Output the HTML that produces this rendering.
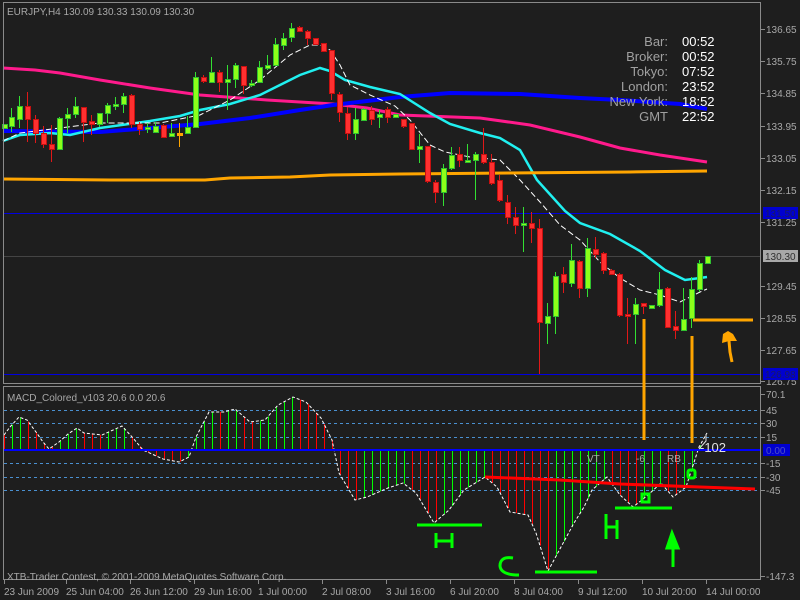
<!DOCTYPE html>
<html><head><meta charset="utf-8"><style>
html,body{margin:0;padding:0;background:#1e1e1e;width:800px;height:600px;overflow:hidden}
svg{display:block}
text{font-family:"Liberation Sans","DejaVu Sans",sans-serif}
</style></head><body>
<svg id="s" width="800" height="600" xmlns="http://www.w3.org/2000/svg">
<rect width="800" height="600" fill="#1e1e1e"/>
<g id="back"></g>
<!-- frames -->
<rect x="3.5" y="2.5" width="757" height="381" fill="none" stroke="#8a8a8a"/>
<rect x="3.5" y="386.5" width="757" height="193" fill="none" stroke="#8a8a8a"/>
<g id="fg"></g>
<!-- texts -->
<g font-size="10" fill="#a8a8a8">
<text x="7" y="15">EURJPY,H4  130.09 130.33 130.09 130.30</text>
<text x="7" y="401">MACD_Colored_v103 20.6 0.0 20.6</text>
<text x="7" y="580">XTB-Trader Contest, © 2001-2009 MetaQuotes Software Corp.</text>
</g>
<g font-size="10" fill="#a8a8a8">
<text x="766" y="33">136.65</text><text x="766" y="65">135.75</text><text x="766" y="97">134.85</text>
<text x="766" y="130">133.95</text><text x="766" y="162">133.05</text><text x="766" y="194">132.15</text>
<text x="766" y="226">131.25</text><text x="766" y="290">129.45</text><text x="766" y="322">128.55</text>
<text x="766" y="354">127.65</text><text x="766" y="385">126.75</text>
<text x="766" y="398">70.1</text><text x="766" y="414">45</text><text x="766" y="427">30</text><text x="766" y="441">15</text>
<text x="766" y="467">-15</text><text x="766" y="481">-30</text><text x="766" y="494">-45</text><text x="766" y="580">-147.3</text>
</g>
<rect x="763" y="207" width="35" height="12" fill="#0000d0"/><text x="765" y="217" font-size="10" fill="#1a1a60">131.50</text>
<rect x="763" y="368" width="35" height="12" fill="#0000d0"/><text x="765" y="378" font-size="10" fill="#1a1a60">126.98</text>
<rect x="763" y="250" width="35" height="12" fill="#a8a8a8"/><text x="765" y="260" font-size="10" fill="#303030">130.30</text>
<rect x="763" y="444" width="27" height="12" fill="#0000d0"/><text x="766" y="454" font-size="10" fill="#5050c0">0.00</text>
<g font-size="13" fill="#a0a0a0" text-anchor="end">
<text x="668" y="46">Bar:</text><text x="668" y="61">Broker:</text><text x="668" y="76">Tokyo:</text>
<text x="668" y="91">London:</text><text x="668" y="106">New York:</text><text x="668" y="121">GMT</text>
</g>
<g font-size="13" fill="#ffffff">
<text x="682" y="46">00:52</text><text x="682" y="61">00:52</text><text x="682" y="76">07:52</text>
<text x="682" y="91">23:52</text><text x="682" y="106">18:52</text><text x="682" y="121">22:52</text>
</g>
<g font-size="10" fill="#a8a8a8">
<text x="587" y="462">VT</text><text x="636" y="462">-6</text><text x="667" y="462">RB</text>
</g>
<text x="700" y="452" font-size="13" fill="#e0e0e0">-102</text>
<g font-size="10" fill="#a8a8a8">
<text x="4" y="595">23 Jun 2009</text><text x="66" y="595">25 Jun 04:00</text><text x="130" y="595">26 Jun 12:00</text>
<text x="194" y="595">29 Jun 16:00</text><text x="258" y="595">1 Jul 00:00</text><text x="322" y="595">2 Jul 08:00</text>
<text x="386" y="595">3 Jul 16:00</text><text x="450" y="595">6 Jul 20:00</text><text x="514" y="595">8 Jul 04:00</text>
<text x="578" y="595">9 Jul 12:00</text><text x="642" y="595">10 Jul 20:00</text><text x="706" y="595">14 Jul 00:00</text>
</g>
</svg>
<script>
var NS="http://www.w3.org/2000/svg";
var back=document.getElementById("back"),fg=document.getElementById("fg");
function el(p,t,a){var e=document.createElementNS(NS,t);for(var k in a)e.setAttribute(k,a[k]);p.appendChild(e);return e;}
function pl(p,pts,st,w,extra){var a={points:pts.map(function(q){return q.join(",")}).join(" "),fill:"none",stroke:st,"stroke-width":w};for(var k in extra)a[k]=extra[k];return el(p,"polyline",a);}
// horizontal level lines
el(back,"line",{x1:4,y1:213.5,x2:760,y2:213.5,stroke:"#0000e0"});
el(back,"line",{x1:4,y1:374.5,x2:760,y2:374.5,stroke:"#0000e0"});
el(back,"line",{x1:4,y1:256.5,x2:760,y2:256.5,stroke:"#444"});
// axis ticks
[29,61,93,126,158,190,222,286,318,350,381,394,410,423,437,463,477,490,576].forEach(function(y){el(back,"line",{x1:761,y1:y+.5,x2:765,y2:y+.5,stroke:"#8a8a8a"})});
[4,66,130,194,258,322,386,450,514,578,642,706].forEach(function(x){el(back,"line",{x1:x+.5,y1:580,x2:x+.5,y2:584,stroke:"#8a8a8a"})});
// indicator dotted levels
[410,423,437,463,477,490].forEach(function(y){el(back,"line",{x1:4,y1:y+.5,x2:760,y2:y+.5,stroke:"#4a90d0","stroke-dasharray":"3,3"})});
// MAs
pl(back,[[3,68],[35,70],[60,73],[100,80],[150,88],[200,95],[267,100],[333,104],[367,108],[400,115],[480,118],[530,125],[580,137],[620,148],[660,155],[707,162]],"#ff1a8c",3);
pl(back,[[3,131],[100,132],[200,124],[250,118],[300,110],[333,105],[367,101],[400,97],[450,93],[520,94],[580,98],[620,100],[680,104],[707,109]],"#0000ff",4);
pl(back,[[3,141],[20,135],[50,133],[70,135],[100,128],[150,121],[180,116],[200,110],[230,104],[260,95],[280,85],[300,75],[320,68],[330,71],[345,80],[370,87],[400,94],[430,113],[450,124],[480,133],[500,138],[520,150],[537,180],[565,211],[580,223],[610,234],[640,251],[665,270],[685,280],[700,278],[707,277]],"#20f0f0",2.5);
pl(back,[[3,141],[20,133],[60,128],[100,123],[160,123],[200,115],[230,100],[260,80],[290,55],[310,45],[320,45],[330,50],[340,65],[350,85],[370,95],[395,106],[410,120],[430,145],[445,152],[470,157],[500,160],[520,180],[540,202],[560,225],[580,240],[600,262],[620,278],[640,290],[660,295],[680,302],[700,292],[707,289]],"#ffffff",1,{"stroke-dasharray":"6,3"});
pl(back,[[3,179],[110,180],[205,180],[230,178],[290,177],[330,175],[400,174],[630,172],[707,171]],"#ffa500",3);
// candles
var C=[[4,124,128,124,128,'g'],[11,117,126,108,132,'g'],[19,106,119,96,128,'g'],[27,106,119,92,142,'r'],[35,119,133,115,143,'r'],[43,133,144,126,148,'r'],[51,144,149,125,162,'r'],[59,118,149,117,149,'g'],[67,114,118,108,133,'g'],[75,106,114,97,118,'g'],[83,107,122,108,142,'r'],[91,121,124,115,135,'r'],[99,113,124,113,127,'g'],[107,105,113,103,123,'g'],[115,104,106,97,110,'g'],[123,96,104,93,113,'g'],[131,95,124,94,128,'r'],[139,124,129,122,135,'r'],[147,127,129,123,133,'g'],[155,126,132,122,132,'g'],[163,125,137,124,138,'r'],[171,133,136,123,137,'g'],[179,133,134,123,147,'o'],[187,127,133,116,134,'g'],[195,77,127,72,127,'g'],[203,77,81,75,83,'r'],[211,72,82,57,83,'g'],[219,72,82,70,92,'r'],[227,79,82,65,110,'g'],[235,65,79,63,88,'g'],[243,66,85,66,94,'r'],[251,83,85,80,87,'g'],[259,67,82,61,83,'g'],[267,65,68,55,70,'g'],[275,44,65,38,66,'g'],[283,38,45,33,50,'g'],[291,28,37,23,42,'g'],[299,27,31,26,32,'r'],[307,31,38,30,45,'r'],[315,38,44,38,45,'r'],[323,43,51,43,52,'r'],[331,50,93,50,100,'r'],[339,94,112,92,122,'r'],[347,113,133,107,140,'r'],[355,119,133,108,140,'g'],[363,109,120,108,121,'g'],[371,110,119,106,125,'r'],[379,114,117,110,128,'g'],[387,109,117,107,123,'r'],[395,114,117,114,117,'g'],[403,119,126,119,128,'r'],[411,123,149,123,149,'r'],[419,146,149,134,163,'g'],[427,146,181,146,183,'r'],[435,182,192,180,203,'r'],[443,168,192,164,206,'g'],[451,155,168,147,170,'g'],[459,154,160,147,167,'r'],[467,160,162,144,163,'g'],[475,154,160,152,200,'g'],[483,154,162,128,164,'r'],[491,162,183,154,185,'r'],[499,180,200,175,202,'r'],[507,202,217,195,224,'r'],[515,217,225,207,234,'r'],[523,223,225,207,252,'g'],[531,223,228,212,243,'r'],[539,228,322,219,374,'r'],[547,316,323,303,344,'g'],[555,276,316,272,334,'g'],[563,274,282,267,293,'r'],[571,260,283,244,287,'g'],[579,261,288,260,298,'r'],[587,248,288,238,297,'g'],[595,249,254,237,258,'r'],[603,253,270,252,274,'r'],[611,270,274,269,275,'r'],[619,274,315,273,317,'r'],[627,314,315,298,344,'r'],[635,304,314,298,344,'g'],[643,303,306,303,314,'r'],[651,305,308,305,308,'g'],[659,289,305,272,307,'g'],[667,288,327,287,327,'r'],[675,326,330,311,339,'r'],[683,319,330,288,331,'g'],[691,289,318,277,328,'g'],[699,263,289,260,292,'g'],[707,256,263,256,263,'g']];
C.forEach(function(c){
 var x=c[0],col=c[5];
 var wk=col=='g'?'#32e032':col=='r'?'#e01818':'#ffa500';
 var fl=col=='g'?'#8cff1a':col=='r'?'#ff3030':'#ffa500';
 var sk=col=='g'?'#30c030':col=='r'?'#c81010':'#ffa500';
 el(back,"line",{x1:x+.5,y1:c[3],x2:x+.5,y2:c[4],stroke:wk});
 var h=Math.max(c[2]-c[1],2);
 el(back,"rect",{x:x-1.5,y:c[1]+.5,width:5,height:h,fill:fl,stroke:sk});
});
// MACD
var E=[[4,435],[10,427],[19,417],[27,420],[36,432],[43,442],[49,449],[59,442],[68,434],[77,428],[84,433],[102,435],[122,426],[133,438],[143,450],[163,459],[179,462],[189,457],[196,437],[209,412],[224,412],[235,409],[250,422],[265,420],[278,405],[293,397],[306,402],[321,418],[332,440],[339,473],[355,500],[367,497],[388,488],[403,483],[416,493],[434,523],[449,510],[464,490],[485,477],[497,487],[510,512],[528,515],[536,533],[548,571],[561,547],[574,523],[584,507],[592,490],[607,477],[620,495],[633,507],[648,495],[661,483],[673,497],[686,487],[699,447],[707,433]];
function ev(x){for(var i=0;i<E.length-1;i++){if(x>=E[i][0]&&x<=E[i+1][0]){var t=(x-E[i][0])/(E[i+1][0]-E[i][0]);return E[i][1]+t*(E[i+1][1]-E[i][1]);}}return E[E.length-1][1];}
var prev=ev(0);
for(var x=4;x<=707;x+=8){var y=ev(x);var up=(y<prev);var col;
 if(y<450) col=up?'#00ff00':'#ff0000'; else col=up?'#00ff00':'#ff0000';
 el(back,"line",{x1:x+.5,y1:450,x2:x+.5,y2:y,stroke:col});prev=y;}
pl(back,E,"#ffffff",1,{"stroke-dasharray":"3,2"});
el(back,"line",{x1:4,y1:450,x2:760,y2:450,stroke:"#0000ff","stroke-width":2});
// red trend line
pl(fg,[[485,477],[560,480],[620,484],[700,487],[755,489]],"#ff0000",3);
// orange annotations
el(fg,"line",{x1:693,y1:320,x2:753,y2:320,stroke:"#ffa500","stroke-width":3});
el(fg,"line",{x1:644,y1:319,x2:644,y2:440,stroke:"#ffa500","stroke-width":3});
el(fg,"line",{x1:692,y1:336,x2:692,y2:443,stroke:"#ffa500","stroke-width":3});
el(fg,"path",{d:"M722,343 L723,334 L728,331 L733,334 L737,341 L729,341 Z",fill:"#ffa500"});
el(fg,"path",{d:"M729,341 L730,352 L732,362",stroke:"#ffa500","stroke-width":3,fill:"none"});
// green annotations
var G="#00ff00";
el(fg,"line",{x1:417,y1:525,x2:482,y2:525,stroke:G,"stroke-width":3});
el(fg,"path",{d:"M436,533 V548 M452,533 V548 M436,541 H452",stroke:G,"stroke-width":3,fill:"none"});
el(fg,"line",{x1:535,y1:572,x2:597,y2:572,stroke:G,"stroke-width":3});
el(fg,"path",{d:"M513,558 Q500,556 500,566 Q501,575 519,575",stroke:G,"stroke-width":3,fill:"none"});
el(fg,"path",{d:"M606,514 V539 M617,520 V539 M606,527 H617",stroke:G,"stroke-width":3,fill:"none"});
el(fg,"line",{x1:615,y1:508,x2:672,y2:508,stroke:G,"stroke-width":3});
el(fg,"rect",{x:642,y:494,width:7,height:8,fill:"none",stroke:G,"stroke-width":3});
el(fg,"rect",{x:688,y:470,width:7,height:8,rx:2,fill:"none",stroke:G,"stroke-width":3});
el(fg,"path",{d:"M667,548 L672,533 L678,548 Z M673,548 V567",stroke:G,"stroke-width":3,fill:G});
el(fg,"path",{d:"M699,449 L706,441 V434",stroke:"#e0e0e0","stroke-width":1,fill:"none"});
</script>
</body></html>
